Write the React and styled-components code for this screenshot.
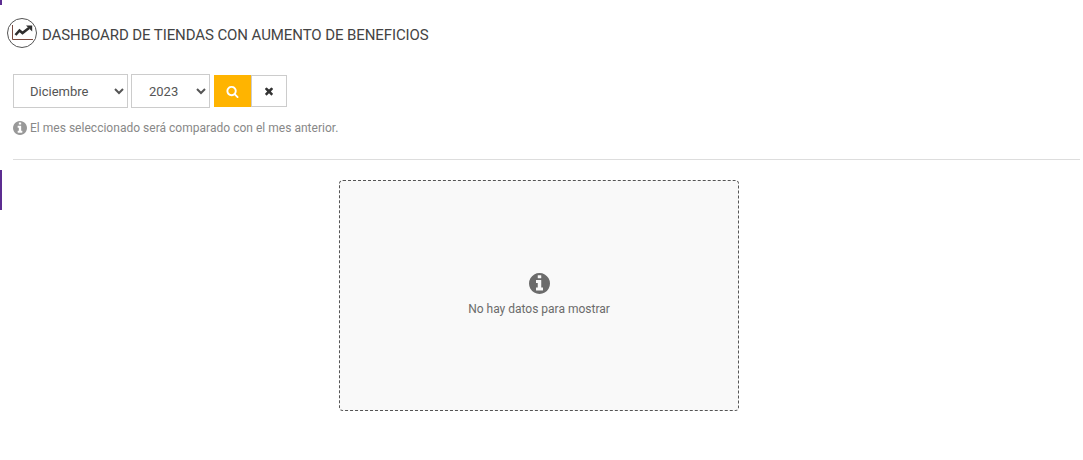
import React, { useState } from 'react';
import styled, { createGlobalStyle } from 'styled-components';

const GlobalStyle = createGlobalStyle`
  html, body {
    margin: 0;
    padding: 0;
    background: #fff;
    font-family: Roboto, "Liberation Sans", sans-serif;
  }
`;

const Page = styled.div`
  position: relative;
  width: 1083px;
  height: 460px;
  overflow: hidden;
  box-sizing: border-box;
  padding: 18px 3px 0 7px;
`;

const SideMark = styled.div`
  position: absolute;
  left: 0;
  top: ${(p) => p.$top}px;
  width: 2px;
  height: ${(p) => p.$height}px;
  background: #5c2d91;
`;

const Header = styled.div`
  display: flex;
  align-items: center;
  gap: 5px;
  height: 30px;
`;

const IconCircle = styled.div`
  width: 30px;
  height: 30px;
  box-sizing: border-box;
  border: 1px solid #555;
  border-radius: 50%;
  display: flex;
  align-items: center;
  justify-content: center;
`;

const Title = styled.h1`
  margin: 0;
  padding-top: 3px;
  font-size: 15px;
  font-weight: 400;
  color: #444;
  letter-spacing: -0.09px;
  white-space: nowrap;
`;

const Filters = styled.div`
  display: flex;
  align-items: center;
  margin: 26px 0 0 6px;
`;

const Select = styled.select`
  width: ${(p) => p.$width}px;
  height: 34px;
  margin-right: 3px;
  box-sizing: border-box;
  border: 1px solid #ccc;
  background: #fff;
  color: #555;
  font-family: inherit;
  font-size: 13px;
  padding: 0 ${(p) => p.$pad}px;
  border-radius: 0;
  outline: none;
`;

const IconButton = styled.button`
  width: ${(p) => p.$width}px;
  height: 32px;
  margin-left: ${(p) => (p.$primary ? 1 : 0)}px;
  box-sizing: border-box;
  padding: 0;
  display: flex;
  align-items: center;
  justify-content: center;
  border: ${(p) => (p.$primary ? 'none' : '1px solid #ccc')};
  background: ${(p) => (p.$primary ? '#ffb400' : '#fff')};
  color: ${(p) => (p.$primary ? '#fff' : '#333')};
  cursor: pointer;
`;

const Hint = styled.p`
  display: flex;
  align-items: center;
  gap: 3px;
  margin: 12px 0 0 6px;
  font-size: 12px;
  line-height: 16px;
  letter-spacing: 0.02px;
  color: #888;
`;

const Divider = styled.hr`
  margin: 23px 0 0 6px;
  border: none;
  border-top: 1px solid #ddd;
`;

const EmptyRow = styled.div`
  display: flex;
  margin: 20px 0 0 332px;
`;

const EmptyBox = styled.div`
  width: 400px;
  height: 231px;
  box-sizing: border-box;
  border: 1px dashed #555;
  border-radius: 4px;
  background: #f9f9f9;
  display: flex;
  flex-direction: column;
  align-items: center;
  justify-content: center;
  gap: 8px;
  color: #6b6b6b;
  font-size: 12px;
  padding-bottom: 2px;
`;

const MONTHS = ['Noviembre', 'Diciembre'];
const YEARS = ['2022', '2023'];

const ChartIcon = () => (
  <svg width="28" height="28" viewBox="0 0 28 28" fill="none">
    <path d="M4.5 6v14.5h20.5" stroke="#7a4a40" strokeWidth="1" />
    <path d="M7.5 16l4-4.5 3 2.5 6.5-5" stroke="#2f2f2f" strokeWidth="2.6" />
    <path d="M18 6.5h6.2v6Z" fill="#2f2f2f" />
  </svg>
);

const InfoIcon = ({ size, color }) => (
  <svg width={size} height={size} viewBox="128 128 1536 1536" fill={color}>
    <path d="M1152 1376v-160q0-14-9-23t-23-9h-96v-512q0-14-9-23t-23-9h-320q-14 0-23 9t-9 23v160q0 14 9 23t23 9h96v320h-96q-14 0-23 9t-9 23v160q0 14 9 23t23 9h448q14 0 23-9t9-23zm-128-896v-160q0-14-9-23t-23-9h-192q-14 0-23 9t-9 23v160q0 14 9 23t23 9h192q14 0 23-9t9-23zm640 416q0 209-103 385.5t-279.5 279.5-385.5 103-385.5-103-279.5-279.5-103-385.5 103-385.5 279.5-279.5 385.5-103 385.5 103 279.5 279.5 103 385.5z" />
  </svg>
);

const SearchIcon = () => (
  <svg width="13" height="13" viewBox="0 0 1792 1792" fill="currentColor">
    <path d="M1216 832q0-185-131.5-316.5t-316.5-131.5-316.5 131.5-131.5 316.5 131.5 316.5 316.5 131.5 316.5-131.5 131.5-316.5zm512 832q0 52-38 90t-90 38q-54 0-90-38l-343-342q-179 124-399 124-143 0-273.5-55.5t-225-150-150-225-55.5-273.5 55.5-273.5 150-225 225-150 273.5-55.5 273.5 55.5 225 150 150 225 55.5 273.5q0 220-124 399l343 343q37 37 37 90z" />
  </svg>
);

const TimesIcon = () => (
  <svg width="12" height="12" viewBox="0 0 1792 1792" fill="currentColor">
    <path d="M1490 1322q0 40-28 68l-136 136q-28 28-68 28t-68-28l-294-294-294 294q-28 28-68 28t-68-28l-136-136q-28-28-28-68t28-68l294-294-294-294q-28-28-28-68t28-68l136-136q28-28 68-28t68 28l294 294 294-294q28-28 68-28t68 28l136 136q28 28 28 68t-28 68l-294 294 294 294q28 28 28 68z" />
  </svg>
);

const App = () => {
  const [month, setMonth] = useState('Diciembre');
  const [year, setYear] = useState('2023');

  return (
    <Page>
      <GlobalStyle />
      <SideMark $top={-20} $height={25} />
      <SideMark $top={170} $height={40} />
      <Header>
        <IconCircle>
          <ChartIcon />
        </IconCircle>
        <Title>DASHBOARD DE TIENDAS CON AUMENTO DE BENEFICIOS</Title>
      </Header>
      <Filters>
        <Select $width={115} $pad={12} value={month} onChange={(e) => setMonth(e.target.value)}>
          {MONTHS.map((m) => (
            <option key={m}>{m}</option>
          ))}
        </Select>
        <Select $width={79} $pad={13} value={year} onChange={(e) => setYear(e.target.value)}>
          {YEARS.map((y) => (
            <option key={y}>{y}</option>
          ))}
        </Select>
        <IconButton $primary $width={37}>
          <SearchIcon />
        </IconButton>
        <IconButton $width={36}>
          <TimesIcon />
        </IconButton>
      </Filters>
      <Hint>
        <InfoIcon size={14} color="#999" />
        El mes seleccionado será comparado con el mes anterior.
      </Hint>
      <Divider />
      <EmptyRow>
        <EmptyBox>
          <InfoIcon size={21} color="#6b6b6b" />
          No hay datos para mostrar
        </EmptyBox>
      </EmptyRow>
    </Page>
  );
};

export default App;
